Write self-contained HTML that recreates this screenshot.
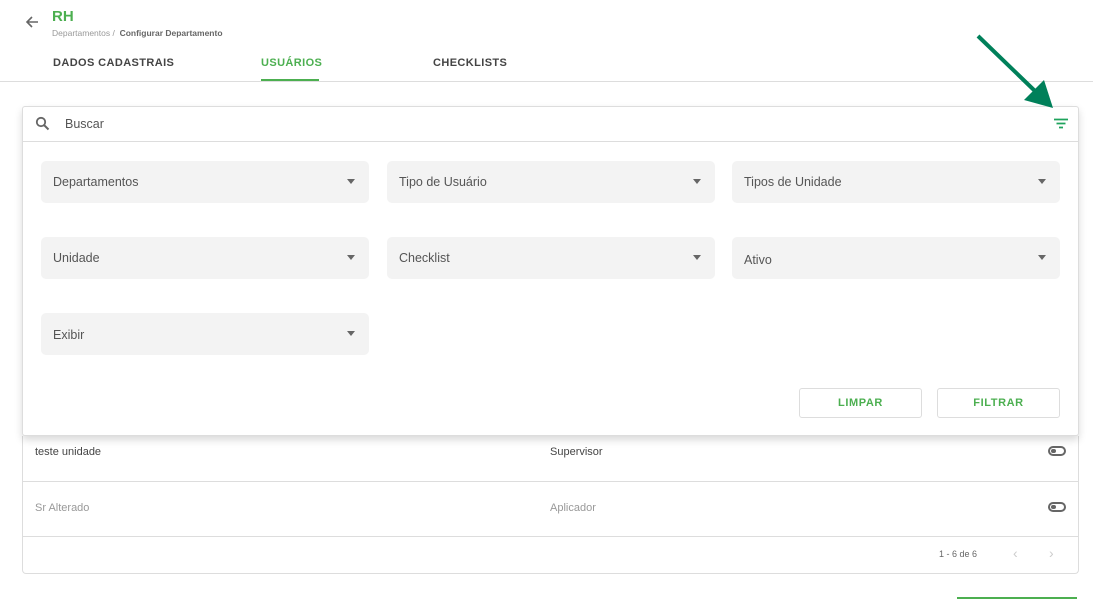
<!DOCTYPE html>
<html><head><meta charset="utf-8"><style>
*{box-sizing:border-box;margin:0;padding:0}
body{width:1093px;height:599px;overflow:hidden;background:#fff;font-family:"Liberation Sans",sans-serif;position:relative;color:#555}
.a{position:absolute}
.tab{position:absolute;top:57px;font-size:11px;font-weight:bold;letter-spacing:.4px;color:#444}
.f{position:absolute;width:328px;height:42px;background:#f3f3f3;border-radius:5px;font-size:12.5px;color:#555;padding:14px 12px}
.f:after{content:"";position:absolute;right:14px;top:18px;border:4.5px solid transparent;border-top:5px solid #666}
.btn{position:absolute;top:388px;width:123px;height:30px;border:1px solid #ddd;border-radius:3px;color:#4caf50;font-weight:bold;font-size:11px;letter-spacing:.6px;text-align:center;line-height:28px}
.tg{position:absolute;left:1048px;width:18px;height:10px;border:2px solid #666;border-radius:5px}
.tg:after{content:"";position:absolute;left:1px;top:1px;width:5px;height:4px;background:#666;border-radius:2px}
</style></head><body>
<svg class="a" style="left:24px;top:14px" width="16" height="16" viewBox="0 0 16 16"><path d="M14 8H3M8 3L3 8l5 5" stroke="#666" stroke-width="1.6" fill="none"/></svg>
<div class="a" style="left:52px;top:8px;font-size:15px;font-weight:bold;color:#4caf50">RH</div>
<div class="a" style="left:52px;top:28px;font-size:8.5px;color:#999">Departamentos / &nbsp;<span style="color:#666;font-weight:bold">Configurar Departamento</span></div>
<div class="tab" style="left:53px">DADOS CADASTRAIS</div>
<div class="tab" style="left:261px;color:#4caf50">USUÁRIOS</div>
<div class="a" style="left:261px;top:79px;width:58px;height:2px;background:#4caf50"></div>
<div class="tab" style="left:433px">CHECKLISTS</div>
<div class="a" style="left:0;top:81px;width:1093px;height:1px;background:#ddd"></div>

<div class="a" style="left:22px;top:436px;width:1057px;height:138px;border:1px solid #ddd;border-top:none;border-radius:0 0 4px 4px"></div>
<div class="a" style="left:22px;top:481px;width:1057px;height:1px;background:#ddd"></div>
<div class="a" style="left:22px;top:536px;width:1057px;height:1px;background:#ddd"></div>
<div class="a" style="left:35px;top:446px;font-size:11px;color:#444">teste unidade</div>
<div class="a" style="left:550px;top:446px;font-size:11px;color:#444">Supervisor</div>
<div class="a" style="left:35px;top:502px;font-size:11px;color:#999">Sr Alterado</div>
<div class="a" style="left:550px;top:502px;font-size:11px;color:#999">Aplicador</div>
<div class="tg" style="top:446px"></div>
<div class="tg" style="top:502px"></div>
<div class="a" style="left:939px;top:549px;font-size:9px;color:#666">1 - 6 de 6</div>
<div class="a" style="left:1013px;top:545px;font-size:14px;color:#ccc">&#8249;</div>
<div class="a" style="left:1049px;top:545px;font-size:14px;color:#ccc">&#8250;</div>
<div class="a" style="left:957px;top:597px;width:120px;height:2px;background:#4caf50"></div>

<div class="a" style="left:22px;top:106px;width:1057px;height:330px;border:1px solid #ddd;border-radius:3px;background:#fff;box-shadow:0 4px 8px rgba(0,0,0,.15)">
<div class="a" style="left:0;top:34px;width:1055px;height:1px;background:#ddd"></div>
</div>
<svg class="a" style="left:35px;top:116px" width="15" height="15" viewBox="0 0 15 15"><circle cx="6" cy="6" r="4.2" stroke="#666" stroke-width="1.8" fill="none"/><path d="M9 9l4.5 4.5" stroke="#666" stroke-width="2"/></svg>
<div class="a" style="left:65px;top:117px;font-size:12.5px;color:#555">Buscar</div>
<svg class="a" style="left:1053px;top:118px" width="16" height="12" viewBox="0 0 16 12"><path d="M1 1.5h14M3.5 5.5h9M6 9.5h4" stroke="#1fa35c" stroke-width="1.8"/></svg>
<svg class="a" style="left:970px;top:30px" width="85" height="80" viewBox="0 0 85 80"><path d="M8 6L66 62" stroke="#00805a" stroke-width="4"/><path d="M83 78L54 70L74 50Z" fill="#00805a"/></svg>

<div class="f" style="left:41px;top:161px">Departamentos</div>
<div class="f" style="left:387px;top:161px">Tipo de Usuário</div>
<div class="f" style="left:732px;top:161px">Tipos de Unidade</div>
<div class="f" style="left:41px;top:237px">Unidade</div>
<div class="f" style="left:387px;top:237px">Checklist</div>
<div class="f" style="left:732px;top:237px;padding-top:16px">Ativo</div>
<div class="f" style="left:41px;top:313px;padding-top:15px">Exibir</div>
<div class="btn" style="left:799px">LIMPAR</div>
<div class="btn" style="left:937px">FILTRAR</div>
</body></html>
